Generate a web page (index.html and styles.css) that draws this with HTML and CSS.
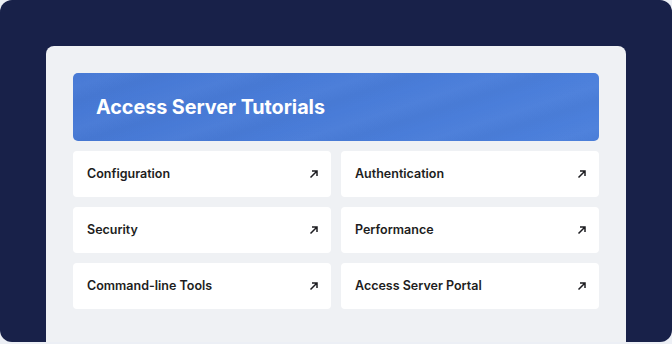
FILE: index.html
```html
<!DOCTYPE html>
<html lang="en">
<head>
    <meta charset="UTF-8">
    <meta name="viewport" content="width=device-width, initial-scale=1.0">
    <title>Access Server Tutorials</title>
    <link rel="stylesheet" href="styles.css">
</head>
<body>
    <div class="frame">
        <div class="panel">
            <div class="banner">
                <h1>Access Server Tutorials</h1>
            </div>
            <div class="cards">
                <a class="card" href="#">Configuration
                    <svg class="arrow" viewBox="0 0 10 10"><path d="M1.5 8.5 L8 2 M3 2 H8 V7"/></svg>
                </a>
                <a class="card" href="#">Authentication
                    <svg class="arrow" viewBox="0 0 10 10"><path d="M1.5 8.5 L8 2 M3 2 H8 V7"/></svg>
                </a>
                <a class="card" href="#">Security
                    <svg class="arrow" viewBox="0 0 10 10"><path d="M1.5 8.5 L8 2 M3 2 H8 V7"/></svg>
                </a>
                <a class="card" href="#">Performance
                    <svg class="arrow" viewBox="0 0 10 10"><path d="M1.5 8.5 L8 2 M3 2 H8 V7"/></svg>
                </a>
                <a class="card" href="#">Command-line Tools
                    <svg class="arrow" viewBox="0 0 10 10"><path d="M1.5 8.5 L8 2 M3 2 H8 V7"/></svg>
                </a>
                <a class="card" href="#">Access Server Portal
                    <svg class="arrow" viewBox="0 0 10 10"><path d="M1.5 8.5 L8 2 M3 2 H8 V7"/></svg>
                </a>
            </div>
        </div>
    </div>
</body>
</html>
```

FILE: styles.css
```css
body {
    font-family: 'Inter', 'Noto Sans', sans-serif;
    background-color: rgb(236, 239, 245);
    margin: 0;
    padding: 0;
}
.frame {
    height: 342px;
    background-color: rgb(24, 33, 73);
    border-radius: 12px;
    padding: 46px 46px 0;
    box-sizing: border-box;
    overflow: hidden;
}
.panel {
    height: 100%;
    background-color: rgb(239, 241, 244);
    border-radius: 8px 8px 0 0;
    padding: 27px 27px 0;
    box-sizing: border-box;
}
.banner {
    height: 68px;
    border-radius: 5px;
    background-color: rgb(74, 125, 217);
    background-image:
        repeating-linear-gradient(162deg, rgba(255, 255, 255, 0) 0, rgba(255, 255, 255, 0.025) 14px, rgba(0, 0, 0, 0.02) 28px, rgba(255, 255, 255, 0) 40px),
        linear-gradient(90deg, rgb(71, 121, 213), rgb(75, 127, 219));
    display: flex;
    align-items: center;
    padding: 0 23px;
}
h1 {
    margin: 0;
    color: white;
    font-size: 19.8px;
    font-weight: 700;
    letter-spacing: -0.05px;
}
.cards {
    display: grid;
    grid-template-columns: 1fr 1fr;
    gap: 10px;
    margin-top: 10px;
}
.card {
    height: 46px;
    padding-bottom: 1px;
    box-sizing: border-box;
    background-color: white;
    border-radius: 4px;
    display: flex;
    align-items: center;
    justify-content: space-between;
    padding-left: 14px;
    padding-right: 12px;
    color: rgb(29, 29, 33);
    text-decoration: none;
    font-size: 12.5px;
    font-weight: 600;
}
.arrow {
    width: 10px;
    height: 10px;
    fill: none;
    stroke: rgb(29, 29, 33);
    stroke-width: 1.5;
}
```
